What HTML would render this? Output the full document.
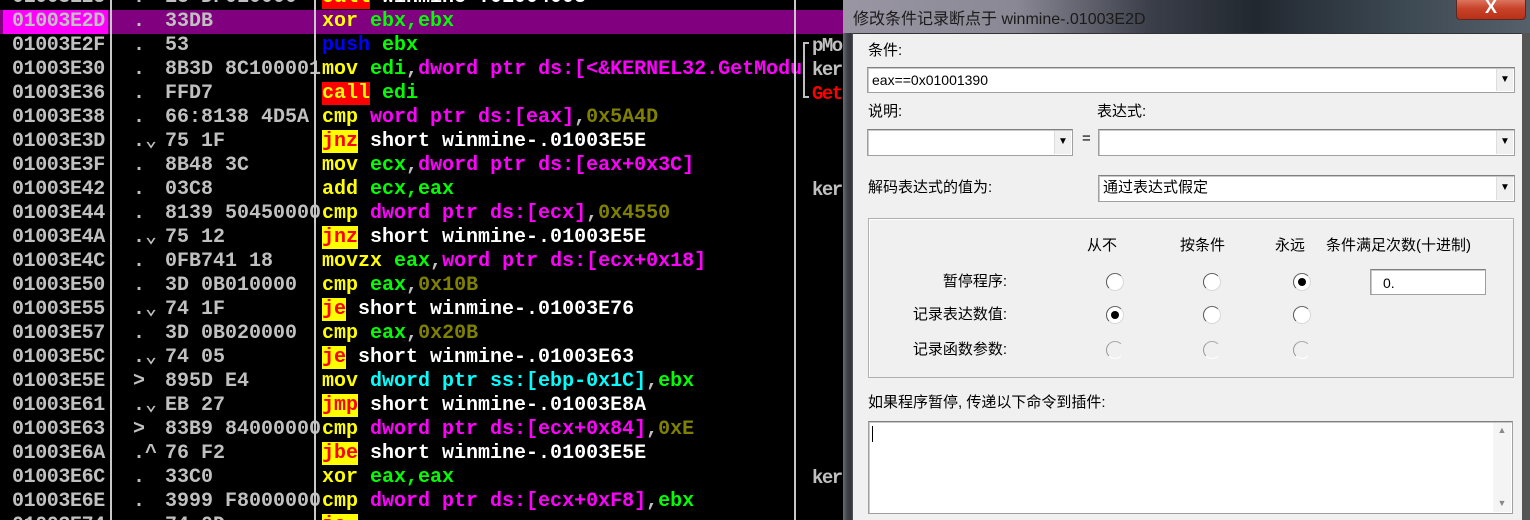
<!DOCTYPE html>
<html><head><meta charset="utf-8"><style>
*{margin:0;padding:0;box-sizing:border-box}
html{width:1530px;height:520px;overflow:hidden}
body{width:1530px;height:520px;overflow:hidden;background:#000;position:relative;font-family:"Liberation Mono",monospace}
.r{position:absolute;left:0;height:24px;width:845px;font:bold 20px/24px "Liberation Mono",monospace;white-space:pre;color:#c0c0c0}
.r>span{position:absolute;top:0}
.a{left:12px;letter-spacing:-0.4px}
.d{left:133px}
.h{left:165px}
.s{left:322px}
.y{color:#ff0}.g{color:#0f0}.m{color:#f0f}.o{color:#808000}.w{color:#fff}.c{color:#0ff}.b{color:#00f}
.call{background:#f00;color:#ff0}
.j{background:#ff0;color:#f00}
.vl{position:absolute;top:0;width:2px;height:520px;background:#c8c8c8}
.cm{position:absolute;font:bold 19px/24px "Liberation Mono",monospace;color:#c0c0c0;letter-spacing:-1.5px}
#dlg{position:absolute;left:843px;top:0;width:687px;height:520px;background:linear-gradient(90deg,#6a6e74,#40444a 4px,#30343a 8px,#555 10px)}
#title{position:absolute;left:0;top:0;width:687px;height:33px;background:linear-gradient(90deg,#9a96a4 0%,#8a8894 25%,#3a3e48 45%,#222830 60%,#3a4650 80%,#56606a 100%)}
#title .t{position:absolute;left:10px;top:5px;font:16px "Liberation Sans","Noto Sans CJK SC",sans-serif;color:#1a1a1a}
#close{position:absolute;left:613px;top:-3px;width:70px;height:23px;border:1px solid #5a2a20;border-radius:0 0 4px 4px;background:linear-gradient(#e0806a,#c8432a 50%,#b83018);color:#fff;font:bold 18px/18px "Liberation Sans",sans-serif;text-align:center}
#client{position:absolute;left:10px;top:33px;width:669px;height:487px;background:#f0f0f0;border-top:1px solid #333}
.l{position:absolute;font:15px/18px "Liberation Sans","Noto Sans CJK SC",sans-serif;color:#000;white-space:nowrap}
.cb{position:absolute;background:#fff;border:1px solid #a0a0a0;border-top-color:#808080;box-shadow:inset 1px 1px 0 #c8c8c8}
.cb .bt{position:absolute;right:1px;top:1px;bottom:1px;width:17px;background:#f0f0f0;border-left:1px solid #ddd;font:10px/22px "Liberation Sans",sans-serif;text-align:center;color:#000}
.cb .tx{position:absolute;left:4px;top:3px;font:15px/18px "Liberation Sans","Noto Sans CJK SC",sans-serif}
.grp{position:absolute;border:1px solid #b0b0b0;box-shadow:1px 1px 0 #fff inset}
.rd{position:absolute;width:18px;height:18px;border-radius:50%;border:1.5px solid #d8d8d8;border-left-color:#555;border-top-color:#666;background:#fff}
.rd.on::after{content:"";position:absolute;left:3.5px;top:3.5px;width:8px;height:8px;border-radius:50%;background:#000}
.rd.dis{border-left-color:#999;border-top-color:#aaa;background:#f0f0f0;border-right-color:#f0f0f0;border-bottom-color:#fff}
</style></head><body>

<div class="r" style="top:-14px"><span class="a">01003E28</span><span class="d">.</span><span class="h">E8 DF010000</span><span class="s"><span class="call">call</span> <span class="w">winmine-.01004008</span></span></div>
<div class="r" style="top:10px;background:#800080"><span class="a" style="left:3px;width:105px;background:#f0f;padding-left:9px;color:#c0c0c0">01003E2D</span><span class="d">.</span><span class="h">33DB</span><span class="s"><span class="y">xor</span> <span class="g">ebx,ebx</span></span></div>
<div class="r" style="top:34px"><span class="a">01003E2F</span><span class="d">.</span><span class="h">53</span><span class="s"><span class="b">push</span> <span class="g">ebx</span></span></div>
<div class="r" style="top:58px"><span class="a">01003E30</span><span class="d">.</span><span class="h">8B3D 8C100001</span><span class="s" style="background:#000"><span class="y">mov</span> <span class="g">edi</span>,<span class="m">dword ptr ds:[&lt;&amp;KERNEL32.GetModu</span></span></div>
<div class="r" style="top:82px"><span class="a">01003E36</span><span class="d">.</span><span class="h">FFD7</span><span class="s"><span class="call">call</span> <span class="g">edi</span></span></div>
<div class="r" style="top:106px"><span class="a">01003E38</span><span class="d">.</span><span class="h">66:8138 4D5A</span><span class="s"><span class="y">cmp</span> <span class="m">word ptr ds:[eax]</span>,<span class="o">0x5A4D</span></span></div>
<div class="r" style="top:130px"><span class="a">01003E3D</span><span class="d">.⌄</span><span class="h">75 1F</span><span class="s"><span class="j">jnz</span> <span class="w">short winmine-.01003E5E</span></span></div>
<div class="r" style="top:154px"><span class="a">01003E3F</span><span class="d">.</span><span class="h">8B48 3C</span><span class="s"><span class="y">mov</span> <span class="g">ecx</span>,<span class="m">dword ptr ds:[eax+0x3C]</span></span></div>
<div class="r" style="top:178px"><span class="a">01003E42</span><span class="d">.</span><span class="h">03C8</span><span class="s"><span class="y">add</span> <span class="g">ecx,eax</span></span></div>
<div class="r" style="top:202px"><span class="a">01003E44</span><span class="d">.</span><span class="h">8139 50450000</span><span class="s" style="background:#000"><span class="y">cmp</span> <span class="m">dword ptr ds:[ecx]</span>,<span class="o">0x4550</span></span></div>
<div class="r" style="top:226px"><span class="a">01003E4A</span><span class="d">.⌄</span><span class="h">75 12</span><span class="s"><span class="j">jnz</span> <span class="w">short winmine-.01003E5E</span></span></div>
<div class="r" style="top:250px"><span class="a">01003E4C</span><span class="d">.</span><span class="h">0FB741 18</span><span class="s"><span class="y">movzx</span> <span class="g">eax</span>,<span class="m">word ptr ds:[ecx+0x18]</span></span></div>
<div class="r" style="top:274px"><span class="a">01003E50</span><span class="d">.</span><span class="h">3D 0B010000</span><span class="s"><span class="y">cmp</span> <span class="g">eax</span>,<span class="o">0x10B</span></span></div>
<div class="r" style="top:298px"><span class="a">01003E55</span><span class="d">.⌄</span><span class="h">74 1F</span><span class="s"><span class="j">je</span> <span class="w">short winmine-.01003E76</span></span></div>
<div class="r" style="top:322px"><span class="a">01003E57</span><span class="d">.</span><span class="h">3D 0B020000</span><span class="s"><span class="y">cmp</span> <span class="g">eax</span>,<span class="o">0x20B</span></span></div>
<div class="r" style="top:346px"><span class="a">01003E5C</span><span class="d">.⌄</span><span class="h">74 05</span><span class="s"><span class="j">je</span> <span class="w">short winmine-.01003E63</span></span></div>
<div class="r" style="top:370px"><span class="a">01003E5E</span><span class="d">&gt;</span><span class="h">895D E4</span><span class="s"><span class="y">mov</span> <span class="c">dword ptr ss:[ebp-0x1C]</span>,<span class="g">ebx</span></span></div>
<div class="r" style="top:394px"><span class="a">01003E61</span><span class="d">.⌄</span><span class="h">EB 27</span><span class="s"><span class="j">jmp</span> <span class="w">short winmine-.01003E8A</span></span></div>
<div class="r" style="top:418px"><span class="a">01003E63</span><span class="d">&gt;</span><span class="h">83B9 84000000</span><span class="s" style="background:#000"><span class="y">cmp</span> <span class="m">dword ptr ds:[ecx+0x84]</span>,<span class="o">0xE</span></span></div>
<div class="r" style="top:442px"><span class="a">01003E6A</span><span class="d">.^</span><span class="h">76 F2</span><span class="s"><span class="j">jbe</span> <span class="w">short winmine-.01003E5E</span></span></div>
<div class="r" style="top:466px"><span class="a">01003E6C</span><span class="d">.</span><span class="h">33C0</span><span class="s"><span class="y">xor</span> <span class="g">eax,eax</span></span></div>
<div class="r" style="top:490px"><span class="a">01003E6E</span><span class="d">.</span><span class="h">3999 F8000000</span><span class="s" style="background:#000"><span class="y">cmp</span> <span class="m">dword ptr ds:[ecx+0xF8]</span>,<span class="g">ebx</span></span></div>
<div class="r" style="top:514px;height:6px;overflow:hidden"><span class="a">01003E74</span><span class="d">.⌄</span><span class="h">74 0D</span><span class="s"><span class="j">je </span></span></div>

<div class="vl" style="left:110px"></div>
<div class="vl" style="left:314px"></div>
<div class="vl" style="left:794px"></div>

<div style="position:absolute;left:803px;top:42px;width:6px;height:56px;border:2px solid #c0c0c0;border-right:none"></div>
<div class="cm" style="left:812px;top:34px">pMo</div>
<div class="cm" style="left:812px;top:58px">ker</div>
<div class="cm" style="left:812px;top:82px;color:#f00">Get</div>
<div class="cm" style="left:812px;top:178px">ker</div>
<div class="cm" style="left:812px;top:466px">ker</div>

<div id="dlg">
<div id="title"><div class="t">修改条件记录断点于 winmine-.01003E2D</div><div id="close">X</div></div>
<div id="client">
<div class="l" style="left:15px;top:8px">条件:</div>
<div class="cb" style="left:14px;top:33px;width:648px;height:26px"><div class="tx" style="font-size:14px">eax==0x01001390</div><div class="bt">▼</div></div>
<div class="l" style="left:15px;top:69px">说明:</div>
<div class="l" style="left:244px;top:69px">表达式:</div>
<div class="cb" style="left:14px;top:95px;width:206px;height:27px"><div class="bt">▼</div></div>
<div class="l" style="left:229px;top:96px">=</div>
<div class="cb" style="left:245px;top:95px;width:417px;height:27px"><div class="bt">▼</div></div>
<div class="l" style="left:15px;top:145px">解码表达式的值为:</div>
<div class="cb" style="left:245px;top:141px;width:417px;height:27px"><div class="tx">通过表达式假定</div><div class="bt">▼</div></div>
<div class="grp" style="left:15px;top:184px;width:646px;height:160px"></div>
<div class="l" style="left:234px;top:203px">从不</div>
<div class="l" style="left:327px;top:203px">按条件</div>
<div class="l" style="left:422px;top:203px">永远</div>
<div class="l" style="left:473px;top:203px">条件满足次数(十进制)</div>
<div class="l" style="left:50px;top:239px;width:104px;text-align:right">暂停程序:</div>
<div class="l" style="left:50px;top:272px;width:104px;text-align:right">记录表达数值:</div>
<div class="l" style="left:50px;top:307px;width:104px;text-align:right">记录函数参数:</div>
<div class="rd" style="left:253px;top:239px"></div>
<div class="rd" style="left:350px;top:239px"></div>
<div class="rd on" style="left:440px;top:239px"></div>
<div class="rd on" style="left:253px;top:272px"></div>
<div class="rd" style="left:350px;top:272px"></div>
<div class="rd" style="left:440px;top:272px"></div>
<div class="rd dis" style="left:253px;top:307px"></div>
<div class="rd dis" style="left:350px;top:307px"></div>
<div class="rd dis" style="left:440px;top:307px"></div>
<div class="cb" style="left:517px;top:235px;width:116px;height:26px"><div class="tx" style="left:12px;top:4px;font-size:14px">0.</div></div>
<div class="l" style="left:15px;top:360px">如果程序暂停, 传递以下命令到插件:</div>
<div class="cb" style="left:15px;top:387px;width:645px;height:93px"><div style="position:absolute;left:3px;top:4px;width:1px;height:16px;background:#000"></div><div style="position:absolute;right:1px;top:1px;bottom:1px;width:18px;background:#f4f4f4;font:9px/14px 'Liberation Sans',sans-serif;color:#888;text-align:center">▲<div style="position:absolute;bottom:2px;width:18px">▼</div></div></div>
</div>
</div>
</body></html>
